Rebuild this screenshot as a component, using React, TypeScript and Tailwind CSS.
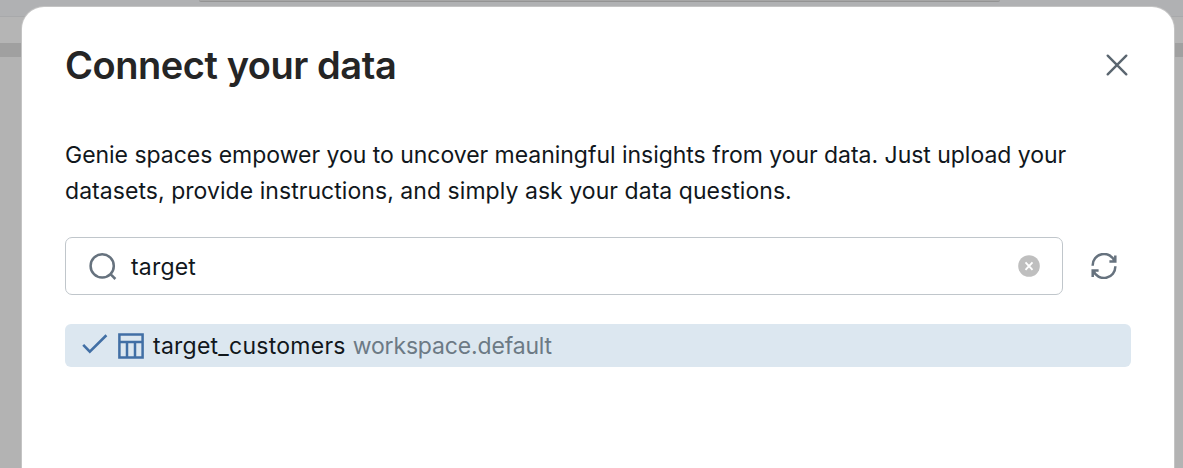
import React from "react";

function CloseIcon() {
  return (
    <svg className="size-6" viewBox="0 0 24 24" fill="none" stroke="#5b6670" strokeWidth="2.4" strokeLinecap="round">
      <path d="M2.7 2.7 21.3 21.3M21.3 2.7 2.7 21.3" />
    </svg>
  );
}

function SearchIcon() {
  return (
    <svg className="size-7 shrink-0" viewBox="0 0 28 28" fill="none" stroke="#66727e" strokeWidth="2.5">
      <circle cx="13.2" cy="13.9" r="11.6" />
      <path d="m21.2 21.8 5.2 5.2" />
    </svg>
  );
}

function ClearIcon() {
  return (
    <svg className="size-[22px]" viewBox="0 0 22 22" fill="none">
      <circle cx="11" cy="11" r="10.8" fill="#bfbfbf" />
      <path d="m7.5 7.3 7 7.6M14.5 7.3l-7 7.6" stroke="#fff" strokeWidth="1.9" />
    </svg>
  );
}

function RefreshIcon() {
  return (
    <svg className="size-[26px]" viewBox="0 0 26 26" fill="none" stroke="#66727e" strokeWidth="2.5">
      <path d="M1.7 12.8A11.3 11.3 0 0 1 23.6 8.4M24.3 2.4v6.2H18.4" />
      <path d="M24.3 13.2A11.3 11.3 0 0 1 2.4 17.6M1.7 24v-6.4H7.6" />
    </svg>
  );
}

function CheckIcon() {
  return (
    <svg className="-mt-1 h-5 w-[26px]" viewBox="0 0 26 20" fill="none" stroke="#416fa5" strokeWidth="2.6">
      <path d="m1.2 10.8 6.6 6.8L24.4 1.3" />
    </svg>
  );
}

function TableIcon() {
  return (
    <svg className="size-[26px]" viewBox="0 0 26 26" fill="none" stroke="#416fa5" strokeWidth="2.5">
      <path d="M1.4 1.4h23.2v23.2H1.4zM1.4 9h23.2M9 9v15.6M17 9v15.6" />
    </svg>
  );
}

export default function App() {
  return (
    <div className="relative h-[468px] w-[1183px] overflow-hidden bg-[#b3b3b3] font-['Inter','Liberation_Sans',sans-serif] text-[#11171c]">
      <div className="h-[17px] border-b border-[#a8a9ab] bg-[#b0b1b3] pl-[199px]">
        <div className="h-[2px] w-[801px] rounded-b-sm border-b border-[#949494] bg-[#a6a6a6]" />
      </div>
      <div className="h-[26px] bg-[#b5b5b5]" />
      <div className="h-[14px] bg-[#a0a0a0]" />

      <section
        role="dialog"
        aria-label="Connect your data"
        className="absolute inset-x-0 top-[7px] bottom-[-24px] mr-[9px] ml-[22px] rounded-[22px] bg-white pr-[43px] pl-[43px] shadow-[0_0_0_1px_#c4c4c4]"
      >
        <header className="flex h-[115px] items-center justify-between pr-[2px]">
          <h1 className="text-[38px] leading-[44px] font-semibold tracking-[-0.45px] whitespace-nowrap text-[#252525]">
            Connect your data
          </h1>
          <button aria-label="Close">
            <CloseIcon />
          </button>
        </header>

        <p className="mt-[15px] text-[23px] leading-9 whitespace-nowrap">
          <span className="tracking-[-0.03px]">
            Genie spaces empower you to uncover meaningful insights from your data. Just upload your
          </span>
          <br />
          <span className="tracking-[0.05px]">
            datasets, provide instructions, and simply ask your data questions.
          </span>
        </p>

        <div className="mt-7 flex items-center">
          <div className="flex h-[58px] w-[998px] items-center rounded-[7px] border border-[#c0c6cb] pr-[22px] pl-[23px]">
            <SearchIcon />
            <span className="ml-[14px] flex-1 pt-[2px] text-[23px] tracking-[0.2px]">target</span>
            <ClearIcon />
          </div>
          <button aria-label="Refresh" className="ml-7">
            <RefreshIcon />
          </button>
        </div>

        <div className="mt-[29px] flex h-[43px] items-center rounded-[6px] bg-[#dce7f0] pl-[17px] text-[23px] whitespace-nowrap">
          <CheckIcon />
          <span className="ml-[10px]">
            <TableIcon />
          </span>
          <span className="ml-[9px] pt-[2px] tracking-[0.25px]">target_customers</span>
          <span className="ml-[7px] pt-[2px] tracking-[-0.16px] text-[#6c7a85]">workspace.default</span>
        </div>
      </section>
    </div>
  );
}
